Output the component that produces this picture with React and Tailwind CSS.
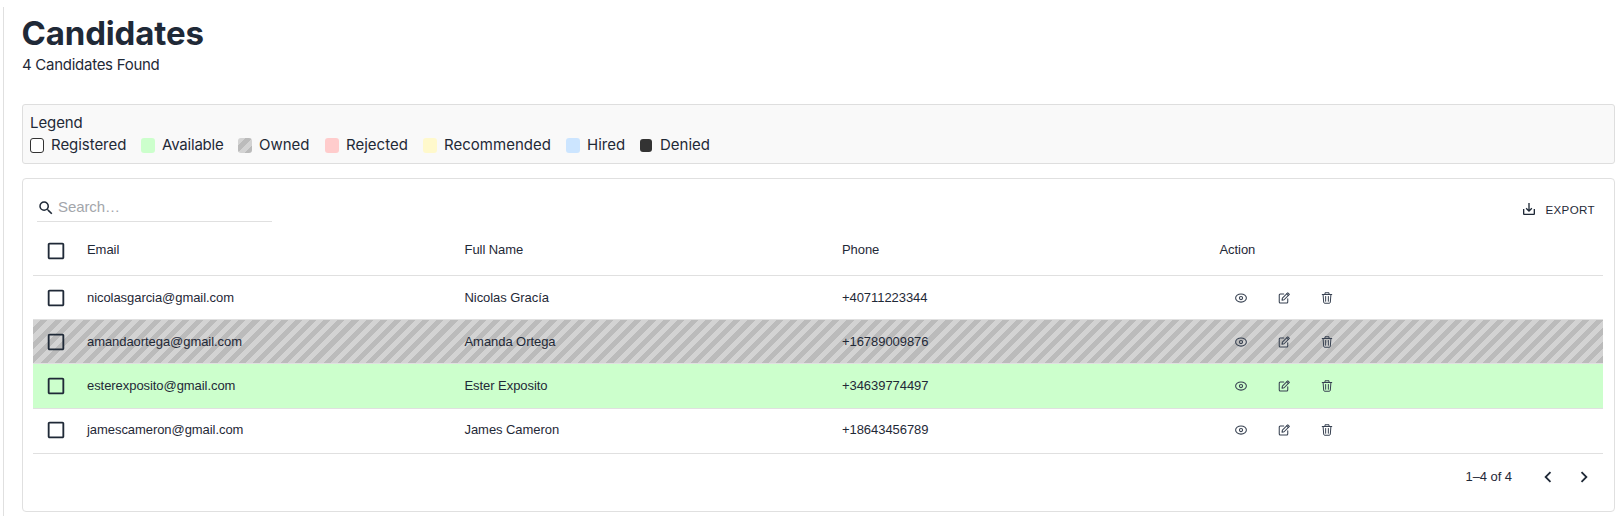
import { MdSearch, MdSaveAlt, MdChevronLeft, MdChevronRight, MdCheckBoxOutlineBlank } from "react-icons/md";

const stripes = "bg-[repeating-linear-gradient(-45deg,#bbbbbb,#bbbbbb_5px,#d3d3d3_5px,#d3d3d3_10px)]";

const legend = [
  { label: "Registered", item: "w-[111px]", swatch: "h-[15px] w-[14px] border border-[#333] bg-white", text: "pl-[7px] tracking-[-0.05px]" },
  { label: "Available", item: "w-[97px]", swatch: "h-[15px] w-[14px] bg-[#ccffcc]", text: "pl-[7px] tracking-[-0.2px]" },
  { label: "Owned", item: "w-[87px]", swatch: `h-[15px] w-[14px] ${stripes}`, text: "pl-[7px] tracking-[0px]" },
  { label: "Rejected", item: "w-[98px]", swatch: "h-[15px] w-[14px] bg-[#ffcccc]", text: "pl-[7px] tracking-[0px]" },
  { label: "Recommended", item: "w-[143px]", swatch: "h-[15px] w-[14px] bg-[#fff9cc]", text: "pl-[7px] tracking-[0.02px]" },
  { label: "Hired", item: "w-[74px]", swatch: "h-[15px] w-[14px] bg-[#cce5ff]", text: "pl-[7px] tracking-[0px]" },
  { label: "Denied", item: "w-[80px]", swatch: "h-[13px] w-[12px] bg-[#333]", text: "pl-[8px] tracking-[0px]" },
];

const rows = [
  { email: "nicolasgarcia@gmail.com", name: "Nicolas Gracía", phone: "+40711223344", cls: "h-[44px]" },
  { email: "amandaortega@gmail.com", name: "Amanda Ortega", phone: "+16789009876", cls: `h-[44px] ${stripes}` },
  { email: "esterexposito@gmail.com", name: "Ester Exposito", phone: "+34639774497", cls: "h-[45px] bg-[#ccffcc]" },
  { email: "jamescameron@gmail.com", name: "James Cameron", phone: "+18643456789", cls: "h-[45px] pb-[2px]" },
];

const strokeProps = { fill: "none", stroke: "currentColor", strokeLinecap: "round", strokeLinejoin: "round" };

function Eye() {
  return (
    <svg viewBox="0 0 24 24" className="size-3" strokeWidth="2.1" {...strokeProps}>
      <path d="M1.2 12C1.2 7.5 6 3.8 12 3.8S22.8 7.5 22.8 12 18 20.2 12 20.2 1.2 16.5 1.2 12Z" />
      <circle cx="12" cy="12" r="3.2" />
    </svg>
  );
}

function Edit() {
  return (
    <svg viewBox="0 0 24 24" className="size-3" strokeWidth="2.1" {...strokeProps}>
      <path d="M11.5 4H4.500a2 2 0 0 0-2 2v14a2 2 0 0 0 2 2h13a2 2 0 0 0 2-2v-6.500" />
      <path d="M8 16.500l.8-4.300L19.500 1.500l3.200 3.200L12.200 15.500 8 16.500Z" />
      <path d="M17.300 3.800l3.200 3.200" />
    </svg>
  );
}

function Trash() {
  return (
    <svg viewBox="0 0 24 24" className="size-3" strokeWidth="2" {...strokeProps}>
      <path d="M2.500 5h19M8 4.600V1.500h8v3.100M4.200 5.500l1.200 15q.2 2 2 2h9.200q1.800 0 2-2l1.200-15" />
      <path d="M9.300 9v9.500M14.700 9v9.500" />
    </svg>
  );
}

function Check() {
  return (
    <div className="flex w-[54px] shrink-0 items-center pl-[11.500px]">
      <MdCheckBoxOutlineBlank className="size-[22px]" />
    </div>
  );
}

export default function App() {
  return (
    <div className="h-[516px] overflow-hidden bg-white pt-[7px] pl-[3px] font-[Inter,sans-serif] text-[#1f2937]">
      <main className="h-full border-l border-[#e0e0e0] pr-[6px] pl-[18px]">
        <h1 className="-ml-[0.5px] h-[46px] pt-[6px] text-[33px] leading-[40px] font-bold tracking-[-0.150px]">Candidates</h1>
        <p className="h-[51px] text-[15px] leading-[24px] tracking-[-0.270px]">4 Candidates Found</p>

        <section className="h-[60px] rounded-[3px] border border-[#dedede] bg-[#f9f9f9] pt-[7px] pl-[7px] text-[15px]">
          <div className="h-[22px] leading-[22px] tracking-[-0.100px]">Legend</div>
          <div className="flex h-[22px] items-center">
            {legend.map((l) => (
              <div key={l.label} className={`flex items-center ${l.item}`}>
                <span className={`shrink-0 rounded-[3px] ${l.swatch}`} />
                <span className={`leading-[22px] ${l.text}`}>{l.label}</span>
              </div>
            ))}
          </div>
        </section>

        <section className="mt-[14px] h-[334px] rounded-[4px] border border-[#e0e0e0] pr-[11px] pl-[10px] font-['Liberation_Sans',sans-serif] text-[13px] tracking-[-0.06px]">
          <div className="flex h-[48px] items-start justify-between pr-[8px] pl-[4px]">
            <div className="mt-[14px] flex h-[29px] w-[235px] items-center border-b border-[#e0e0e0]">
              <MdSearch className="mt-px size-[18px]" />
              <span className="pl-[3px] text-[15px] tracking-[-0.1px] text-[#a3a6ab]">Search…</span>
            </div>
            <div className="mt-[20px] flex h-[20px] items-center gap-[8px] text-[11.600px] tracking-[0.350px]">
              <MdSaveAlt className="size-[16px]" />
              <span className="pt-px">EXPORT</span>
            </div>
          </div>

          <div className="flex h-[49px] items-center border-b border-[#e0e0e0]">
            <Check />
            <span className="w-[377.500px] pb-[2px]">Email</span>
            <span className="w-[377.500px] pb-[2px]">Full Name</span>
            <span className="w-[377.500px] pb-[2px]">Phone</span>
            <span className="pb-[2px]">Action</span>
          </div>

          {rows.map((r) => (
            <div key={r.email} className={`flex items-center border-b border-[#e0e0e0] ${r.cls}`}>
              <Check />
              <span className="w-[377.500px]">{r.email}</span>
              <span className="w-[377.500px]">{r.name}</span>
              <span className="w-[377.500px]">{r.phone}</span>
              <span className="flex gap-[31px] pl-[15px] text-[#374151]">
                <Eye />
                <Edit />
                <Trash />
              </span>
            </div>
          ))}

          <div className="flex h-[46px] items-center justify-end pr-[8px]">
            <span className="mr-[25px]">1–4 of 4</span>
            <MdChevronLeft className="mr-[14px] size-[22px]" />
            <MdChevronRight className="size-[22px]" />
          </div>
        </section>
      </main>
    </div>
  );
}
